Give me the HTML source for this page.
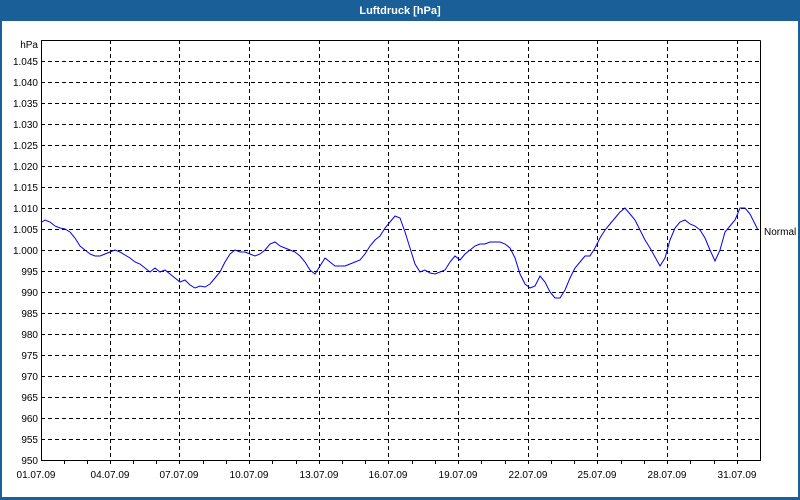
<!DOCTYPE html>
<html><head><meta charset="utf-8"><style>
html,body{margin:0;padding:0;width:800px;height:500px;overflow:hidden;background:#fff;font-family:"Liberation Sans",sans-serif}
</style></head><body>
<svg width="800" height="500" xmlns="http://www.w3.org/2000/svg" style="display:block">
<rect x="0" y="0" width="800" height="500" fill="#1b5f98"/>
<rect x="2" y="21" width="796" height="476" fill="#fff"/>
<text x="400" y="14" fill="#fff" font-size="11" font-weight="bold" text-anchor="middle" font-family="Liberation Sans">Luftdruck [hPa]</text>
<g stroke="#000" stroke-width="1" stroke-dasharray="4,3" shape-rendering="crispEdges">
<line x1="41" x2="760" y1="61.5" y2="61.5"/><line x1="41" x2="760" y1="82.5" y2="82.5"/><line x1="41" x2="760" y1="103.5" y2="103.5"/><line x1="41" x2="760" y1="124.5" y2="124.5"/><line x1="41" x2="760" y1="145.5" y2="145.5"/><line x1="41" x2="760" y1="166.5" y2="166.5"/><line x1="41" x2="760" y1="187.5" y2="187.5"/><line x1="41" x2="760" y1="208.5" y2="208.5"/><line x1="41" x2="760" y1="229.5" y2="229.5"/><line x1="41" x2="760" y1="250.5" y2="250.5"/><line x1="41" x2="760" y1="271.5" y2="271.5"/><line x1="41" x2="760" y1="292.5" y2="292.5"/><line x1="41" x2="760" y1="313.5" y2="313.5"/><line x1="41" x2="760" y1="334.5" y2="334.5"/><line x1="41" x2="760" y1="355.5" y2="355.5"/><line x1="41" x2="760" y1="376.5" y2="376.5"/><line x1="41" x2="760" y1="397.5" y2="397.5"/><line x1="41" x2="760" y1="418.5" y2="418.5"/><line x1="41" x2="760" y1="439.5" y2="439.5"/>
<line y1="40" y2="460" x1="110.5" x2="110.5"/><line y1="40" y2="460" x1="179.5" x2="179.5"/><line y1="40" y2="460" x1="249.5" x2="249.5"/><line y1="40" y2="460" x1="319.5" x2="319.5"/><line y1="40" y2="460" x1="388.5" x2="388.5"/><line y1="40" y2="460" x1="458.5" x2="458.5"/><line y1="40" y2="460" x1="528.5" x2="528.5"/><line y1="40" y2="460" x1="597.5" x2="597.5"/><line y1="40" y2="460" x1="667.5" x2="667.5"/><line y1="40" y2="460" x1="737.5" x2="737.5"/>
</g>
<g stroke="#000" stroke-width="1" shape-rendering="crispEdges" fill="none">
<polyline points="760.5,40.5 41.5,40.5 41.5,460.5 760.5,460.5 760.5,40.5"/>
<path d="M64.5 460v4M87.5 460v4M110.5 460v4M133.5 460v4M156.5 460v4M179.5 460v4M203.5 460v4M226.5 460v4M249.5 460v4M272.5 460v4M296.5 460v4M319.5 460v4M342.5 460v4M365.5 460v4M388.5 460v4M412.5 460v4M435.5 460v4M458.5 460v4M481.5 460v4M505.5 460v4M528.5 460v4M551.5 460v4M574.5 460v4M597.5 460v4M621.5 460v4M644.5 460v4M667.5 460v4M690.5 460v4M714.5 460v4M737.5 460v4"/>
</g>
<g font-size="10" fill="#000" text-anchor="end" font-family="Liberation Sans">
<text x="38" y="48">hPa</text>
<text x="38" y="65">1.045</text><text x="38" y="86">1.040</text><text x="38" y="107">1.035</text><text x="38" y="128">1.030</text><text x="38" y="149">1.025</text><text x="38" y="170">1.020</text><text x="38" y="191">1.015</text><text x="38" y="212">1.010</text><text x="38" y="233">1.005</text><text x="38" y="254">1.000</text><text x="38" y="275">995</text><text x="38" y="296">990</text><text x="38" y="317">985</text><text x="38" y="338">980</text><text x="38" y="359">975</text><text x="38" y="380">970</text><text x="38" y="401">965</text><text x="38" y="422">960</text><text x="38" y="443">955</text><text x="38" y="464">950</text>
</g>
<g font-size="10" fill="#000" text-anchor="middle" font-family="Liberation Sans">
<text x="36" y="478">01.07.09</text><text x="110" y="478">04.07.09</text><text x="179" y="478">07.07.09</text><text x="249" y="478">10.07.09</text><text x="319" y="478">13.07.09</text><text x="388" y="478">16.07.09</text><text x="458" y="478">19.07.09</text><text x="528" y="478">22.07.09</text><text x="597" y="478">25.07.09</text><text x="667" y="478">28.07.09</text><text x="737" y="478">31.07.09</text>
</g>
<text x="764" y="235" font-size="10" fill="#000" font-family="Liberation Sans">Normal</text>
<polyline fill="none" stroke="#0000ee" stroke-width="1" points="42,222 45,220 50,222 55,226 60,228 65,229 70,232 75,238 80,246 85,250 90,254 95,256 100,256 105,254 110,252 115,250 120,252 125,255 130,258 135,262 140,264 145,268 150,272 155,268 160,272 165,270 170,274 175,278 180,282 185,280 190,285 195,288 200,286 205,287 210,284 215,278 220,272 225,262 230,254 235,250 240,252 245,252 250,254 255,256 260,254 265,250 270,244 275,242 280,246 285,248 290,250 295,252 300,256 305,262 310,270 315,274 320,266 325,258 330,262 335,266 340,266 345,266 350,264 355,262 360,260 365,254 370,246 375,240 380,236 385,228 390,222 395,216 400,218 405,232 410,248 415,264 420,272 425,270 430,273 435,274 440,272 445,270 450,262 455,256 460,260 465,254 470,250 475,246 480,244 485,244 490,242 495,242 500,242 505,244 510,248 515,258 520,274 525,284 530,288 535,286 540,276 545,282 550,292 555,298 560,298 565,290 570,278 575,268 580,262 585,256 590,256 595,248 600,238 605,230 610,224 615,218 620,212 625,208 630,214 635,220 640,230 645,240 650,248 655,257 660,266 665,258 670,240 675,228 680,222 685,220 690,224 695,226 700,230 705,238 710,250 715,261 720,250 725,232 730,226 735,220 740,208 745,208 750,214 755,224 758,230"/>
</svg>
</body></html>
